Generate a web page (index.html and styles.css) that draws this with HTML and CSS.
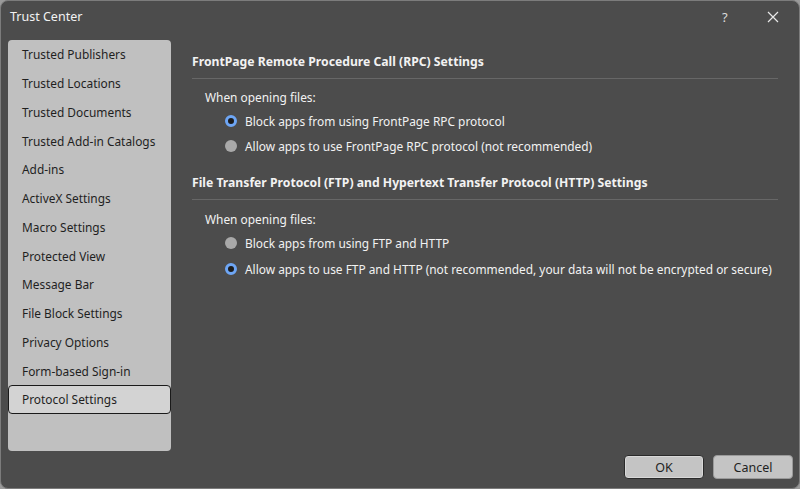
FILE: index.html
```html
<!DOCTYPE html>
<html>
<head>
<meta charset="utf-8">
<link rel="stylesheet" href="styles.css">
</head>
<body>
<div class="window">
  <div class="titlebar">
    <span class="title">Trust Center</span>
    <span class="help">?</span>
    <span class="close">
      <svg width="12" height="12" viewBox="0 0 12 12"><path d="M1 1 L11 11 M11 1 L1 11" stroke="#e8e8e8" stroke-width="1.2" fill="none"/></svg>
    </span>
  </div>
  <div class="main">
    <div class="sidebar">
      <div class="nav-item">Trusted Publishers</div>
      <div class="nav-item">Trusted Locations</div>
      <div class="nav-item">Trusted Documents</div>
      <div class="nav-item">Trusted Add-in Catalogs</div>
      <div class="nav-item">Add-ins</div>
      <div class="nav-item">ActiveX Settings</div>
      <div class="nav-item">Macro Settings</div>
      <div class="nav-item">Protected View</div>
      <div class="nav-item">Message Bar</div>
      <div class="nav-item">File Block Settings</div>
      <div class="nav-item">Privacy Options</div>
      <div class="nav-item">Form-based Sign-in</div>
      <div class="nav-item selected">Protocol Settings</div>
    </div>
    <div class="content">
      <div class="section first-section">
        <div class="heading">FrontPage Remote Procedure Call (RPC) Settings</div>
        <div class="label">When opening files:</div>
        <div class="radio-row first"><span class="radio checked"></span>Block apps from using FrontPage RPC protocol</div>
        <div class="radio-row"><span class="radio"></span>Allow apps to use FrontPage RPC protocol (not recommended)</div>
      </div>
      <div class="section second">
        <div class="heading">File Transfer Protocol (FTP) and Hypertext Transfer Protocol (HTTP) Settings</div>
        <div class="label">When opening files:</div>
        <div class="radio-row first"><span class="radio"></span>Block apps from using FTP and HTTP</div>
        <div class="radio-row wide"><span class="radio checked"></span>Allow apps to use FTP and HTTP (not recommended, your data will not be encrypted or secure)</div>
      </div>
    </div>
  </div>
  <div class="footer">
    <button class="btn default">OK</button>
    <button class="btn">Cancel</button>
  </div>
</div>
</body>
</html>
```
FILE: styles.css
```css
html, body {
  margin: 0;
  padding: 0;
  background: #9a9a9a;
}
body {
  font-family: "Noto Sans", "Open Sans", sans-serif;
  font-size: 11.9px;
}
.window {
  box-sizing: border-box;
  width: 800px;
  height: 489px;
  background: #4c4c4c;
  border: 1px solid #7c7c7c;
  border-radius: 8px;
  display: flex;
  flex-direction: column;
  overflow: hidden;
}
.titlebar {
  height: 39px;
  display: flex;
  align-items: center;
  padding: 0 0 8px 9px;
  box-sizing: border-box;
  color: #f2f2f2;
}
.title {
  font-size: 12.5px;
  flex: 1;
}
.help {
  font-size: 13px;
  color: #dcdcdc;
  width: 38px;
  padding-left: 11px;
  text-align: left;
}
.close {
  display: flex;
  width: 26px;
  margin-right: 13px;
  justify-content: center;
}
.main {
  display: flex;
  height: 411px;
}
.sidebar {
  margin-left: 7px;
  width: 163px;
  box-sizing: border-box;
  background: #c0c0c0;
  border-radius: 4px;
  display: flex;
  flex-direction: column;
}
.nav-item {
  height: 28.75px;
  display: flex;
  align-items: center;
  padding-left: 14px;
  color: #1f1f1f;
  box-sizing: border-box;
  white-space: nowrap;
}
.nav-item.selected {
  background: #d3d3d3;
  border: 1px solid #1a1a1a;
  border-radius: 4px;
  padding-left: 13px;
}
.content {
  flex: 1;
  margin-left: 21px;
  margin-right: 21px;
  color: #f2f2f2;
}
.section {
  padding-top: 13px;
}
.section.second {
  padding-top: 19px;
}
.heading {
  font-weight: bold;
  font-size: 12.2px;
  line-height: 18px;
  padding-bottom: 7px;
  border-bottom: 1px solid #676767;
}
.label {
  line-height: 18px;
  margin-top: 10px;
  padding-left: 13px;
}
.first-section .label {
  margin-top: 9px;
}
.radio-row {
  display: flex;
  align-items: center;
  line-height: 18px;
  padding-left: 33px;
  margin-top: 7px;
  white-space: nowrap;
}
.radio-row.first {
  margin-top: 6px;
}
.radio-row.wide {
  margin-top: 8px;
}
.radio {
  box-sizing: border-box;
  width: 12px;
  height: 12px;
  border-radius: 50%;
  background: #a9a9a9;
  margin-right: 8px;
  flex: none;
}
.radio.checked {
  background: #1c1c1c;
  border: 3px solid #6ea6f5;
}
.footer {
  flex: 1;
  display: flex;
  justify-content: flex-end;
  align-items: flex-start;
  padding: 4px 6px 0 0;
  gap: 9px;
}
.btn {
  font-family: inherit;
  font-size: 12.5px;
  width: 80px;
  height: 24px;
  box-sizing: border-box;
  background: #c4c4c4;
  color: #1f1f1f;
  border: 1px solid #9a9a9a;
  border-radius: 4px;
  padding: 0;
}
.btn.default {
  border: 1px solid #2a2a2a;
  box-shadow: inset 0 0 0 1px #d8d8d8;
}
```
